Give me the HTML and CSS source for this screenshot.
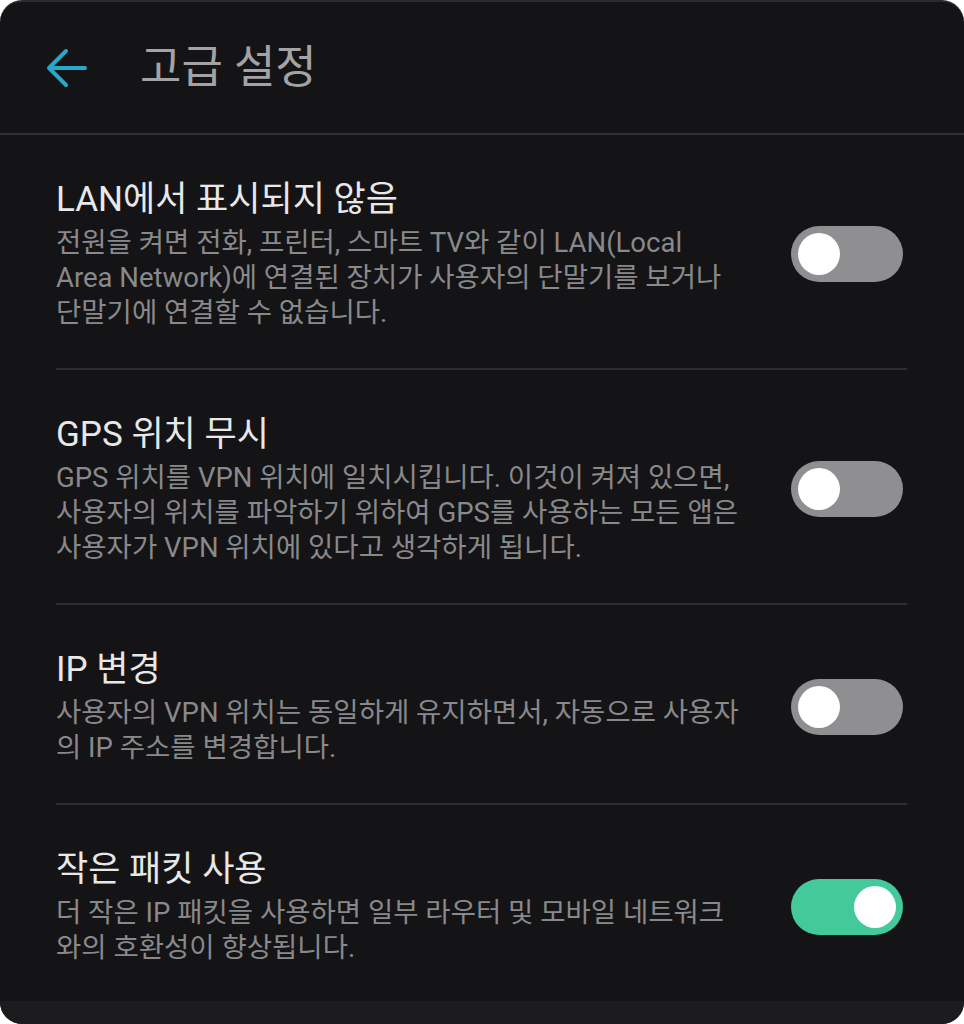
FILE: index.html
```html
<!DOCTYPE html>
<html lang="ko">

<head>
  <meta charset="UTF-8">
  <meta name="viewport" content="width=device-width, initial-scale=1.0">
  <title>고급 설정</title>
  <link rel="stylesheet" href="styles.css">
</head>

<body>
  <div class="screen">
    <!-- 상단 바 -->
    <div class="header">
      <svg class="back" width="44" height="44" viewBox="0 0 44 44">
        <path d="M41 22H6M22 5L5 22l17 17" fill="none" stroke="#29a7c9" stroke-width="4" stroke-linecap="round" stroke-linejoin="round"/>
      </svg>
      <h1>고급 설정</h1>
    </div>

    <!-- 설정 목록 -->
    <div class="list">
      <div class="row">
        <div class="text">
          <div class="title">LAN에서 표시되지 않음</div>
          <div class="desc">전원을 켜면 전화, 프린터, 스마트 TV와 같이 LAN(Local<br>Area Network)에 연결된 장치가 사용자의 단말기를 보거나<br>단말기에 연결할 수 없습니다.</div>
        </div>
        <div class="toggle"><span class="knob"></span></div>
      </div>

      <div class="row">
        <div class="text">
          <div class="title">GPS 위치 무시</div>
          <div class="desc">GPS 위치를 VPN 위치에 일치시킵니다. 이것이 켜져 있으면,<br>사용자의 위치를 파악하기 위하여 GPS를 사용하는 모든 앱은<br>사용자가 VPN 위치에 있다고 생각하게 됩니다.</div>
        </div>
        <div class="toggle"><span class="knob"></span></div>
      </div>

      <div class="row">
        <div class="text">
          <div class="title">IP 변경</div>
          <div class="desc">사용자의 VPN 위치는 동일하게 유지하면서, 자동으로 사용자<br>의 IP 주소를 변경합니다.</div>
        </div>
        <div class="toggle"><span class="knob"></span></div>
      </div>

      <div class="row">
        <div class="text">
          <div class="title">작은 패킷 사용</div>
          <div class="desc">더 작은 IP 패킷을 사용하면 일부 라우터 및 모바일 네트워크<br>와의 호환성이 향상됩니다.</div>
        </div>
        <div class="toggle on"><span class="knob"></span></div>
      </div>
    </div>

    <div class="bottom"></div>
  </div>
</body>

</html>
```

FILE: styles.css
```css
html,
body {
  margin: 0;
  height: 100%;
  background-color: #ffffff;
}

body {
  font-family: Roboto, "Noto Sans CJK KR", sans-serif;
}

.screen {
  height: 100%;
  box-sizing: border-box;
  display: flex;
  flex-direction: column;
  background-color: #141416;
  border-top: 2px solid #2b2b2d;
  border-radius: 22px;
  overflow: hidden;
}

.header {
  height: 131px;
  display: flex;
  align-items: center;
  padding-left: 44px;
  border-bottom: 2px solid #313133;
}

.back {
  display: block;
}

.header h1 {
  margin: 0 0 0 52px;
  font-size: 45px;
  line-height: 56px;
  font-weight: normal;
  color: #a3a3a5;
}

.row {
  display: flex;
  align-items: center;
  margin: 0 57px 0 56px;
  padding: 43px 0 38px;
  border-bottom: 2px solid #2e2e30;
}

.row:last-child {
  border-bottom: none;
  padding-bottom: 36px;
}

.text {
  flex: 1;
}

.title {
  font-size: 35px;
  line-height: 44px;
  color: #e8e8e8;
}

.desc {
  margin-top: 3px;
  font-size: 27.5px;
  line-height: 35px;
  color: #89898b;
  white-space: nowrap;
}

.toggle {
  width: 112px;
  height: 56px;
  border-radius: 28px;
  background-color: #8f8f92;
  display: flex;
  align-items: center;
  padding: 0 7px;
  box-sizing: border-box;
  margin-right: 4px;
}

.toggle.on {
  background-color: #43c99a;
  justify-content: flex-end;
}

.knob {
  width: 42px;
  height: 42px;
  border-radius: 50%;
  background-color: #ffffff;
}

.bottom {
  flex: 1;
  background-color: #1c1c1e;
}
```
